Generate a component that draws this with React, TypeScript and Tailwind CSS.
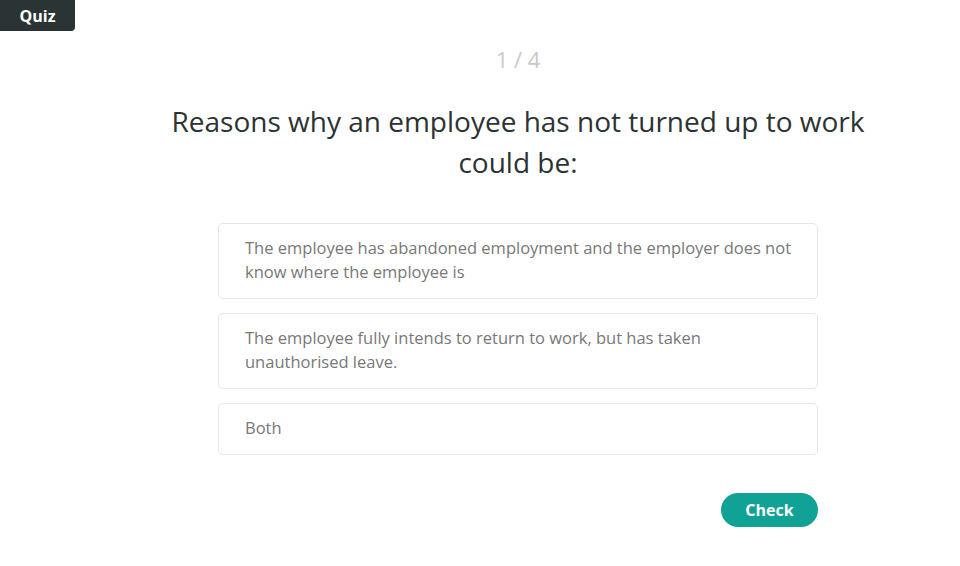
import { useState } from "react";

const OPTIONS = [
  "The employee has abandoned employment and the employer does not know where the employee is",
  "The employee fully intends to return to work, but has taken unauthorised leave.",
  "Both",
];

export default function App() {
  const [picked, setPicked] = useState<number | null>(null);

  return (
    <div className="relative min-h-[566px] w-[960px] bg-white font-['Open_Sans','Noto_Sans',sans-serif]">
      <div className="absolute left-0 top-0 flex h-[31px] w-[75px] items-center justify-center rounded-br-[4px] bg-[#2a3434] text-[16px] font-bold text-white">
        Quiz
      </div>

      <div className="flex flex-col items-center pl-[76px] pt-[44px]">
        <div className="text-[22px] leading-[30px] text-[#c9c9c9]">1 / 4</div>

        <h1 className="mt-[27px] w-[720px] text-center text-[28px] leading-[41px] font-normal text-[#2b3333]">
          Reasons why an employee has not turned up to work could be:
        </h1>

        <div className="mt-[40px] flex w-[600px] flex-col gap-[14px]">
          {OPTIONS.map((opt, i) => (
            <button
              key={i}
              onClick={() => setPicked(i)}
              className={
                "rounded-[5px] border bg-white pl-[26px] pr-[20px] pt-[12px] pb-[14px] text-left text-[16.5px] leading-[24px] text-[#787878] " +
                (picked === i ? "border-[#0fa295]" : "border-[#e6e6e6]")
              }
            >
              {opt}
            </button>
          ))}
        </div>

        <div className="mt-[38px] flex w-[600px] justify-end">
          <button className="h-[34px] w-[97px] rounded-full bg-[#0fa295] text-[16px] font-bold text-white">
            Check
          </button>
        </div>
      </div>
    </div>
  );
}
